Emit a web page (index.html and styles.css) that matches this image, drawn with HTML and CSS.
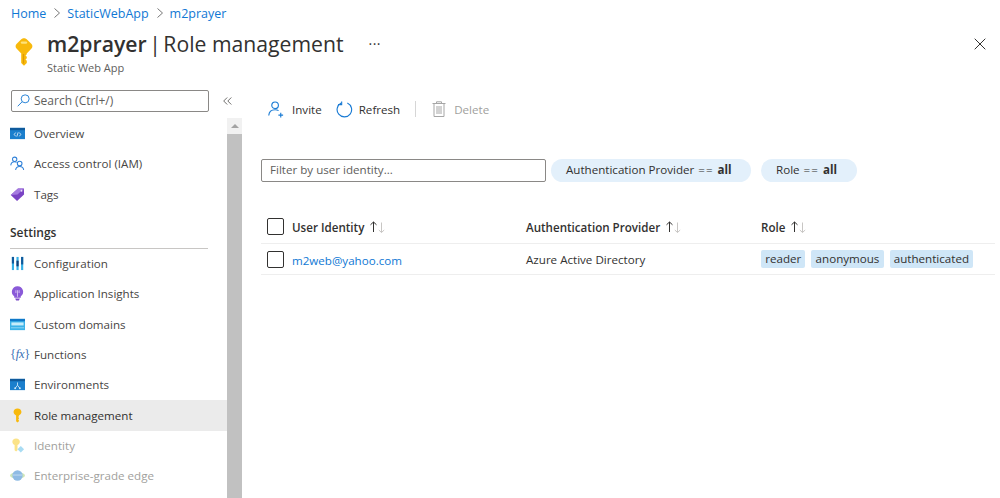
FILE: index.html
```html
<!DOCTYPE html>
<html lang="en">
<head>
    <meta charset="UTF-8">
    <title>m2prayer | Role management</title>
    <link rel="stylesheet" href="styles.css">
</head>
<body>
    <nav class="breadcrumb">
        <a>Home</a>
        <svg class="crumb-sep" viewBox="0 0 8 12"><path d="M1.5 1.5 6.5 6l-5 4.5" /></svg>
        <a>StaticWebApp</a>
        <svg class="crumb-sep" viewBox="0 0 8 12"><path d="M1.5 1.5 6.5 6l-5 4.5" /></svg>
        <a>m2prayer</a>
    </nav>

    <header class="page-header">
        <svg class="header-icon" viewBox="0 0 18 28">
            <path fill="#f8b90c" d="M9 .3C7.600.3 6.500.9 5.500 1.900L1.500 6C.3 7.200.3 9.300 1.500 10.500L5.500 14.800c.2.200.4.400.7.500V25l2.800 2.700 2.800-2.700v-2.200l-1.300-1.200 1.300-1.300v-1.600l-1.300-1.200 1.300-1.200v-1c.3-.1.500-.3.700-.5l4-4.300c1.200-1.200 1.200-3.300 0-4.500l-4-4.100C11.500.9 10.400.3 9 .3z" />
            <rect x="5.800" y="3.400" width="6.400" height="2.400" rx="1.200" fill="#fde27a" />
            <rect x="7.900" y="16" width="1.200" height="9.500" fill="#e09a06" />
        </svg>
        <div class="header-text">
            <h1><b>m2prayer</b> <span>|</span> <span class="page-name">Role management</span></h1>
            <div class="subtitle">Static Web App</div>
        </div>
        <div class="more">···</div>
        <svg class="close" viewBox="0 0 12 12"><path d="M.7.7l10.600 10.600M11.300.7.7 11.300" /></svg>
    </header>

    <div class="layout">
        <aside class="sidebar">
            <div class="search-row">
                <div class="search">
                    <svg class="search-icon" viewBox="0 0 14 14"><circle cx="8.800" cy="5.200" r="4.300" /><path d="M5.600 8.300.8 13.200" /></svg>
                    <span>Search (Ctrl+/)</span>
                </div>
                <svg class="collapse" viewBox="0 0 9 8"><path d="M4.200.5.700 4l3.500 3.500M8.300.5 4.800 4l3.500 3.500" /></svg>
            </div>
            <div class="side-body">
                <ul class="menu">
                    <li class="item">
                        <svg class="mi" viewBox="0 0 16 16"><rect y="2" width="16" height="12" fill="#1b7fcd" /><rect y="2" width="16" height="2.500" fill="#0f5a9c" /><path d="M6 7 4.500 9 6 11M10 7l1.500 2L10 11M8.700 6.800 7.300 11.200" stroke="#fff" stroke-width=".8" fill="none" /></svg>
                        Overview
                    </li>
                    <li class="item">
                        <svg class="mi" viewBox="0 0 16 16" fill="none" stroke="#2f80d8" stroke-width="1.100"><circle cx="5" cy="3.500" r="2.300" /><path d="M.8 10c.3-2.600 1.800-3.800 4-3.800 1 0 1.700.2 2.300.7" /><circle cx="10.300" cy="8" r="2.500" /><path d="M6 15c.3-2.700 2-3.800 4.300-3.800s4 1.100 4.300 3.800" /></svg>
                        Access control (IAM)
                    </li>
                    <li class="item">
                        <svg class="mi" viewBox="0 0 16 16"><path fill="#7a43c4" d="M.8 8.500 8.500 1.500 14.800 1.500 15 8 7.500 15z" /><path fill="#a67be0" d="M.8 8.500 8.500 1.500 14.800 1.500 8 8z" /><circle cx="12.300" cy="4" r="1" fill="#e8dcf8" /></svg>
                        Tags
                    </li>
                </ul>

                <div class="section">Settings</div>

                <ul class="menu">
                    <li class="item">
                        <svg class="mi" viewBox="0 0 16 16"><rect x="2" y="1" width="2.300" height="14" fill="#35b0e6" /><rect x="6.900" y="1" width="2.300" height="14" fill="#35b0e6" /><rect x="11.800" y="1" width="2.300" height="14" fill="#35b0e6" /><rect x="2" y="1" width="2.300" height="7" fill="#0f5a9c" /><rect x="6.900" y="5" width="2.300" height="6" fill="#0f3f78" /><rect x="11.800" y="1" width="2.300" height="8" fill="#0f5a9c" /></svg>
                        Configuration
                    </li>
                    <li class="item">
                        <svg class="mi" viewBox="0 0 16 16"><path fill="#8a5ad8" d="M8 .3a5.900 5.900 0 0 0-3.500 10.700v1.500h7V11A5.900 5.900 0 0 0 8 .3z" /><path fill="#7c4cc8" d="M5.500 13.300h5l-1 2.200h-3z" /><path stroke="#e4d6f8" stroke-width=".8" fill="none" d="M6.300 4.500v3M9.700 4.500v3M8 4.500v7" /></svg>
                        Application Insights
                    </li>
                    <li class="item">
                        <svg class="mi" viewBox="0 0 16 16"><rect y="2" width="16" height="12" fill="#3bb2e8" /><rect y="2" width="16" height="2.500" fill="#1078c8" /><rect x="1.500" y="5.800" width="13" height="3.200" fill="#c6ecfa" /><rect x="1" y="11" width="14" height="1" fill="#8ed6f4" /></svg>
                        Custom domains
                    </li>
                    <li class="item">
                        <span class="fx">{<i>fx</i>}</span>
                        Functions
                    </li>
                    <li class="item">
                        <svg class="mi" viewBox="0 0 16 16"><rect y="2" width="16" height="12" fill="#1b7fcd" /><rect y="2" width="16" height="2.500" fill="#0f5a9c" /><path d="M8 5.800v3M5.500 12l2.500-3.200 2.500 3.200" stroke="#cfe8fa" stroke-width=".9" fill="none" /><circle cx="5.500" cy="12" r="1" fill="#cfe8fa" /><circle cx="10.500" cy="12" r="1" fill="#cfe8fa" /></svg>
                        Environments
                    </li>
                    <li class="item active">
                        <svg class="mi" viewBox="0 0 16 16"><path fill="#f8b90c" d="M8 .5C5.300.5 3.800 2.400 3.800 4.300c0 1.700 1.200 3 2.700 3.700v6l1.500 1.500 1.500-1.500v-1l-.8-.8.8-.8v-1l-.8-.7.8-.8V8c1.500-.7 2.700-2 2.700-3.700C12.200 2.400 10.700.5 8 .5z" /></svg>
                        Role management
                    </li>
                    <li class="item disabled">
                        <svg class="mi" viewBox="0 0 16 16"><path fill="#fbe388" d="M6.500.5C4 .5 2.500 2.300 2.500 4c0 1.600 1 2.800 2.400 3.400V13l1.600 1.500L8 13V7.400C9.400 6.800 10.500 5.600 10.500 4 10.500 2.300 9 .5 6.500.5z" /><path fill="#a9dcf3" d="M11.500 8.500 15 12l-3.500 3.500L8 12z" /></svg>
                        Identity
                    </li>
                    <li class="item disabled">
                        <svg class="mi" viewBox="0 0 16 16"><ellipse cx="8" cy="8" rx="8" ry="3.500" fill="#cfe6b8" /><circle cx="8" cy="8" r="5.500" fill="#8fbbe4" /><path d="M2.800 7.500h10.400" stroke="#c4dcf2" /></svg>
                        Enterprise-grade edge
                    </li>
                </ul>
            </div>
            <div class="scrollbar">
                <div class="scroll-up"><span class="scroll-arrow"></span></div>
                <div class="scroll-thumb"></div>
            </div>
        </aside>

        <main class="content">
            <div class="toolbar">
                <button class="tool">
                    <svg class="tool-icon" viewBox="0 0 18 18" fill="none" stroke="#1a7bd4" stroke-width="1.200"><circle cx="7.500" cy="4.500" r="3.500" /><path d="M.8 15.300c.3-3.900 2.800-6 6.700-6 1.500 0 2.700.3 3.700.9" /><path d="M13.500 12.500v5M11 15h5" /></svg>
                    Invite
                </button>
                <button class="tool refresh">
                    <svg class="tool-icon" viewBox="0 0 18 18" fill="none" stroke="#1a7bd4" stroke-width="1.200"><path d="M5.500 2.200a7.700 7.700 0 1 0 6.500-.1" /><path d="M6 .5v3.400H2.200" /></svg>
                    Refresh
                </button>
                <span class="tool-sep"></span>
                <button class="tool off">
                    <svg class="tool-icon trash" viewBox="0 0 14 16" fill="none" stroke="#a6a6a6" stroke-width="1"><path d="M.5 2.500h13M4.500 2.500V.8h5v1.700M2 2.500v13h10v-13M5 5v8M7 5v8M9 5v8" /></svg>
                    Delete
                </button>
            </div>

            <div class="filters">
                <div class="filter-input">Filter by user identity...</div>
                <div class="chip chip-provider">Authentication Provider <span class="eq">==</span> <b>all</b></div>
                <div class="chip chip-role">Role <span class="eq">==</span> <b>all</b></div>
            </div>

            <div class="grid-row grid-head">
                <div class="cell cell-first">
                    <span class="check"></span>
                    <span class="head-label">User Identity</span>
                    <svg class="sort" viewBox="0 0 18 12"><path class="up" d="M4.500 11V1M1.500 3.800 4.500 1l3 2.800" /><path class="down" d="M12.500 1.500v10M9.800 9l2.700 2.500L15.200 9" /></svg>
                </div>
                <div class="cell">
                    <span class="head-label">Authentication Provider</span>
                    <svg class="sort" viewBox="0 0 18 12"><path class="up" d="M4.500 11V1M1.500 3.800 4.500 1l3 2.800" /><path class="down" d="M12.500 1.500v10M9.800 9l2.700 2.500L15.200 9" /></svg>
                </div>
                <div class="cell">
                    <span class="head-label">Role</span>
                    <svg class="sort" viewBox="0 0 18 12"><path class="up" d="M4.500 11V1M1.500 3.800 4.500 1l3 2.800" /><path class="down" d="M12.500 1.500v10M9.800 9l2.700 2.500L15.200 9" /></svg>
                </div>
            </div>
            <div class="grid-row grid-data">
                <div class="cell cell-first">
                    <span class="check"></span>
                    <a class="user-link">m2web@yahoo.com</a>
                </div>
                <div class="cell">Azure Active Directory</div>
                <div class="cell tags">
                    <span class="tag">reader</span>
                    <span class="tag">anonymous</span>
                    <span class="tag">authenticated</span>
                </div>
            </div>
        </main>
    </div>
</body>
</html>
```

FILE: styles.css
```css
html, body {
    margin: 0;
    padding: 0;
}

body {
    width: 1000px;
    height: 498px;
    overflow: hidden;
    background-color: #ffffff;
    color: #323130;
    font-family: "Open Sans", "Noto Sans", sans-serif;
    font-size: 11.600px;
}

ul {
    list-style: none;
    margin: 0;
    padding: 0;
}

.breadcrumb {
    display: flex;
    align-items: center;
    height: 26px;
    padding-left: 11px;
    color: #0f78d4;
    font-size: 12.500px;
}

.crumb-sep {
    width: 8px;
    height: 12px;
    margin: 0 6px 0 7px;
    fill: none;
    stroke: #777777;
    stroke-width: 1;
}

.page-header {
    display: flex;
    height: 62px;
    padding-left: 15px;
}

.header-icon {
    width: 18px;
    height: 28px;
    margin-top: 12px;
    flex: none;
}

.header-text {
    margin-left: 14px;
}

h1 {
    margin: 3px 0 0;
    font-size: 21.200px;
    font-weight: 400;
    line-height: 30px;
    word-spacing: -3px;
    white-space: nowrap;
}

h1 b {
    font-weight: 600;
}

.page-name {
    word-spacing: 0;
}

.subtitle {
    margin-top: 1px;
    font-size: 11px;
    line-height: 15px;
    color: #605e5c;
}

.more {
    margin: 6px 0 0 25px;
    font-size: 14px;
    line-height: 24px;
    letter-spacing: .5px;
}

.close {
    width: 12px;
    height: 12px;
    margin: 12px 14px 0 auto;
    fill: none;
    stroke: #323130;
    stroke-width: 1;
}

.layout {
    display: flex;
    height: 410px;
}

.sidebar {
    position: relative;
    flex: none;
    width: 242px;
}

.search-row {
    display: flex;
    align-items: center;
    height: 25px;
    padding-left: 11px;
}

.search {
    display: flex;
    align-items: center;
    box-sizing: border-box;
    width: 198px;
    height: 22px;
    padding-bottom: 1px;
    border: 1px solid #8a8886;
    border-radius: 2px;
    color: #605e5c;
    font-size: 12px;
}

.search-icon {
    width: 13px;
    height: 13px;
    margin: 0 4px 0 5px;
    fill: none;
    stroke: #1a7bd4;
    stroke-width: 1;
}

.collapse {
    width: 9px;
    height: 8px;
    margin-left: 14px;
    fill: none;
    stroke: #605e5c;
    stroke-width: .9;
}

.side-body {
    width: 227px;
    padding-top: 6px;
}

.item {
    display: flex;
    align-items: center;
    box-sizing: border-box;
    height: 30.300px;
    padding: 0 0 1px 10px;
    color: #484644;
    white-space: nowrap;
}

.mi {
    flex: none;
    width: 15px;
    height: 15px;
    margin-right: 9px;
}

.fx {
    flex: none;
    width: 15px;
    margin-right: 9px;
    color: #3a6fb5;
    font-family: "Liberation Serif", serif;
    font-size: 12.500px;
    white-space: nowrap;
    letter-spacing: -.3px;
}

.active {
    background-color: #ebebeb;
    color: #323130;
}

.disabled {
    color: #a19f9d;
}

.section {
    height: 27px;
    margin: 11px 19px 0 10px;
    border-bottom: 1px solid #c8c6c4;
    font-size: 12px;
    font-weight: 600;
    line-height: 24px;
}

.scrollbar {
    position: absolute;
    top: 30px;
    bottom: 0;
    left: 227px;
    width: 15px;
    display: flex;
    flex-direction: column;
    background-color: #f1f1f1;
}

.scroll-up {
    display: flex;
    justify-content: center;
    align-items: center;
    height: 16px;
}

.scroll-arrow {
    width: 0;
    height: 0;
    border-left: 4px solid transparent;
    border-right: 4px solid transparent;
    border-bottom: 4px solid #a3a3a3;
}

.scroll-thumb {
    flex: 1;
    background-color: #c1c1c1;
}

.content {
    flex: 1;
    padding: 0 5px 0 19px;
}

.toolbar {
    display: flex;
    align-items: center;
    height: 42px;
    padding-left: 7px;
}

.tool {
    display: flex;
    align-items: center;
    padding: 0;
    border: 0;
    background: none;
    color: #323130;
    font: inherit;
}

.tool-icon {
    width: 17px;
    height: 17px;
    margin-right: 7px;
}

.refresh {
    margin-left: 14px;
}

.refresh .tool-icon {
    margin-right: 6px;
}

.tool-sep {
    width: 1px;
    height: 16px;
    margin: 0 16px 0 15px;
    background-color: #d6d6d6;
}

.off {
    color: #a19f9d;
}

.trash {
    width: 14px;
    height: 16px;
    margin-right: 8px;
}

.filters {
    display: flex;
    align-items: center;
    margin-top: 29px;
}

.filter-input {
    box-sizing: border-box;
    width: 285px;
    height: 23px;
    padding-left: 8px;
    border: 1px solid #8a8886;
    border-radius: 2px;
    color: #605e5c;
    line-height: 20px;
}

.chip {
    box-sizing: border-box;
    height: 23px;
    padding-left: 15px;
    border-radius: 12px;
    background-color: #e3f0fb;
    line-height: 22px;
    white-space: nowrap;
}

.eq {
    letter-spacing: 1px;
    margin: 0 1px;
}

.chip-provider {
    width: 200px;
    margin-left: 5px;
}

.chip-role {
    width: 96px;
    margin-left: 10px;
}

.grid-row {
    display: grid;
    grid-template-columns: 265px 235px 1fr;
    align-items: center;
    width: 734px;
    border-bottom: 1px solid #eeeeee;
}

.grid-head {
    height: 33px;
    margin-top: 28px;
    font-weight: 600;
}

.grid-data {
    height: 30px;
}

.cell {
    display: flex;
    align-items: center;
    white-space: nowrap;
}

.cell-first {
    padding-left: 6px;
}

.check {
    flex: none;
    box-sizing: border-box;
    width: 17px;
    height: 17px;
    margin-right: 8px;
    border: 1px solid #323130;
    border-radius: 2px;
}

.head-label {
    margin-top: 2px;
}

.sort {
    width: 18px;
    height: 12px;
    margin-left: 5px;
    fill: none;
    stroke-width: 1;
}

.up {
    stroke: #323130;
}

.down {
    stroke: #c8c6c4;
}

.user-link {
    margin-top: 2px;
    color: #0f78d4;
}

.tags {
    gap: 6px;
}

.tag {
    padding: 0 4.200px;
    height: 18px;
    background-color: #cfe6f7;
    border-radius: 2px;
    line-height: 18px;
}
```
